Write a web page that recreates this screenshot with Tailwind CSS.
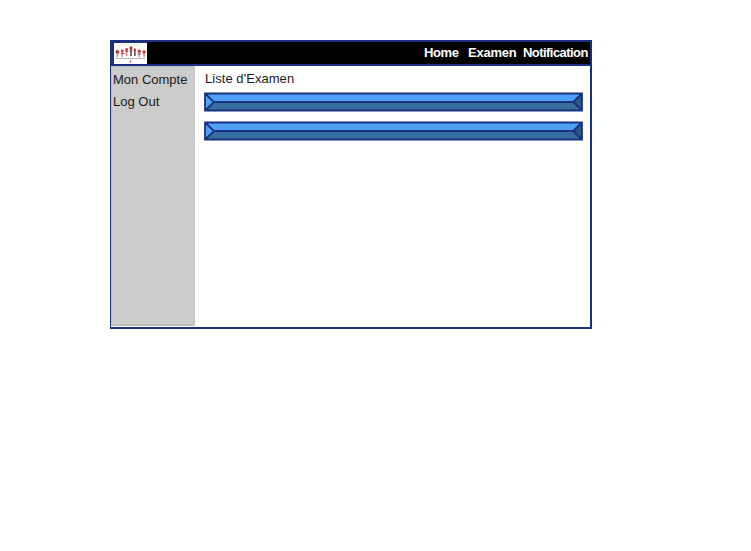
<!DOCTYPE html>
<html lang="fr">
<head>
<meta charset="utf-8">
<title>Liste d'Examen</title>
<script src="https://cdn.jsdelivr.net/npm/@tailwindcss/browser@4"></script>
</head>
<body class="bg-white pt-10 pl-[110px] font-['Liberation_Sans',Arial,sans-serif] text-[13px] leading-[22px] text-[#1a1a1a]">
<div class="flex h-[289px] w-[482px] flex-col border-2 border-l-1 border-[#1a3180] bg-white">
  <header class="flex h-6 shrink-0 border-b-2 border-l-1 border-[#1a3180] bg-black">
    <div class="flex h-[22px] w-[35px] shrink-0 border-t-1 border-l-2 border-[#1a3180]">
    <svg class="block h-[21px] w-[33px] shrink-0" viewBox="0 0 34 21" preserveAspectRatio="none">
      <rect width="34" height="21" fill="#fff"/>
      <path d="M6 2h21" stroke="#ccc" stroke-width=".8" stroke-dasharray="2 .7"/>
      <g fill="#b83a38">
        <circle cx="3.500" cy="9" r="2"/><circle cx="8.500" cy="8" r="1.400"/><circle cx="13" cy="6.500" r="1.500"/><circle cx="17.500" cy="5" r="1.700"/><circle cx="21.500" cy="6.800" r="1.400"/><circle cx="26" cy="8.200" r="1.700"/><circle cx="31" cy="9" r="1.800"/>
      </g>
      <g stroke="#cf8a82" stroke-width="1.600">
        <path d="M3.500 10v4M8.500 9v5M13 8v5M26 9v5M31 10v4"/>
        <path d="M17.500 6v7M21.500 8v5" stroke="#61464a"/>
      </g>
      <path d="M7 10.500h4M11.500 8.500h3M15.500 8h4M24 11h4" stroke="#c8474a" stroke-width=".9"/>
      <path d="M2 15.500h30" stroke="#999" stroke-width="1.200" stroke-dasharray="2 .5 1 .5"/>
      <circle cx="17" cy="18.500" r=".9" fill="#d33c50"/>
    </svg>
    </div>
    <nav class="flex flex-1 justify-end pr-[2px] font-bold leading-[21px] whitespace-nowrap text-white">
      <span class="w-11 tracking-[-0.4px]">Home</span>
      <span class="w-[55px] tracking-[-0.25px]">Examen</span>
      <span class="w-[65px] tracking-[-0.55px]">Notification</span>
    </nav>
  </header>
  <div class="flex flex-1">
    <aside class="h-[260px] w-[84px] shrink-0 border-2 border-l-1 border-t-1 border-[#c0c0c0] border-r-[#c8c8c8] bg-[#cccccc] pt-[2px] pl-px whitespace-nowrap">
      <div>Mon Compte</div>
      <div>Log Out</div>
    </aside>
    <main class="flex-1 pt-[2px] pl-[9px]">
      <h1 class="h-6 pl-px leading-[21px] tracking-[0.05px]">Liste d'Examen</h1>
      <div class="flex flex-col gap-[9px]">
        <svg class="block h-5 w-[379px]" viewBox="0 0 379 20">
          <path d="M1 1.500h377l-9 8.500H10z" fill="#4fa1f6"/><path d="M1 18.500h377l-9-8.500H10z" fill="#386da0"/>
          <path d="M1 1.500l9 8.500-9 8.500z" fill="#4fa1f6"/><path d="M378 1.500l-9 8.500 9 8.500z" fill="#2d5683"/>
          <path d="M1 1.500h377v17H1zl9 8.500-9 8.500M378 1.500l-9 8.500 9 8.500M10 10h359" fill="none" stroke="#1a3180" stroke-width="1.800"/>
        </svg>
        <svg class="block h-5 w-[379px]" viewBox="0 0 379 20">
          <path d="M1 1.500h377l-9 8.500H10z" fill="#4fa1f6"/><path d="M1 18.500h377l-9-8.500H10z" fill="#386da0"/>
          <path d="M1 1.500l9 8.500-9 8.500z" fill="#4fa1f6"/><path d="M378 1.500l-9 8.500 9 8.500z" fill="#2d5683"/>
          <path d="M1 1.500h377v17H1zl9 8.500-9 8.500M378 1.500l-9 8.500 9 8.500M10 10h359" fill="none" stroke="#1a3180" stroke-width="1.800"/>
        </svg>
      </div>
    </main>
  </div>
</div>
</body>
</html>
